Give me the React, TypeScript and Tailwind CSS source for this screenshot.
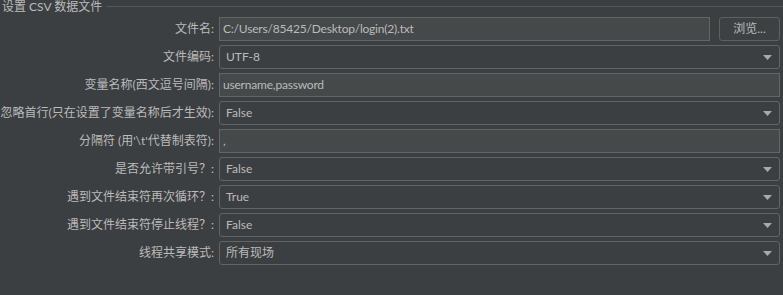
import React from "react";

const font = { fontFamily: '"Lato", "Noto Sans CJK SC", sans-serif' };

function Label({ text }: { text: string }) {
  return (
    <div className="w-[215px] shrink-0 flex justify-end whitespace-nowrap text-[12px] text-[#bbbbbb] pr-[1px]">
      {text}
    </div>
  );
}

function TextField({ value }: { value: string }) {
  return (
    <div className="flex-1 h-[24px] bg-[#45494a] border border-[#646464] flex items-center pl-[3px] text-[12px] tracking-[-0.2px] text-[#bbbbbb] whitespace-nowrap overflow-hidden">
      {value}
    </div>
  );
}

function Combo({ value }: { value: string }) {
  return (
    <div className="flex-1 h-[24px] bg-[#3c3f41] border border-[#646464] rounded-[3px] flex items-center pl-[6px] pr-[7px] text-[12px] text-[#bbbbbb]">
      <span className="flex-1">{value}</span>
      <svg width="9" height="5" viewBox="0 0 9 5">
        <polygon points="0,0 9,0 4.5,5" fill="#aaaaaa" />
      </svg>
    </div>
  );
}

function Row({ label, children }: { label: string; children: React.ReactNode }) {
  return (
    <div className="flex items-center h-[24px] gap-[4px] pr-[3px]">
      <Label text={label} />
      {children}
    </div>
  );
}

export default function App() {
  return (
    <div className="w-[783px] h-[295px] bg-[#3c3f41] overflow-hidden" style={font}>
      <div className="flex items-center h-[13px] pl-[2px]">
        <span className="text-[12px] text-[#bbbbbb] whitespace-nowrap leading-[13px]">设置 CSV 数据文件</span>
        <div className="flex-1 ml-[4px] h-px bg-[#555759]" />
      </div>
      <div className="flex flex-col gap-[4px] mt-[4px]">
        <Row label="文件名:">
          <TextField value="C:/Users/85425/Desktop/login(2).txt" />
          <div className="w-[61px] h-[24px] ml-[5px] shrink-0 border border-[#5e6060] rounded-[3px] bg-[#3e4143] flex items-center justify-center text-[12px] text-[#bbbbbb]">
            浏览...
          </div>
        </Row>
        <Row label="文件编码:">
          <Combo value="UTF-8" />
        </Row>
        <Row label="变量名称(西文逗号间隔):">
          <TextField value="username,password" />
        </Row>
        <Row label="忽略首行(只在设置了变量名称后才生效):">
          <Combo value="False" />
        </Row>
        <Row label="分隔符 (用'\t'代替制表符):">
          <TextField value="," />
        </Row>
        <Row label="是否允许带引号？:">
          <Combo value="False" />
        </Row>
        <Row label="遇到文件结束符再次循环？:">
          <Combo value="True" />
        </Row>
        <Row label="遇到文件结束符停止线程？:">
          <Combo value="False" />
        </Row>
        <Row label="线程共享模式:">
          <Combo value="所有现场" />
        </Row>
      </div>
    </div>
  );
}
